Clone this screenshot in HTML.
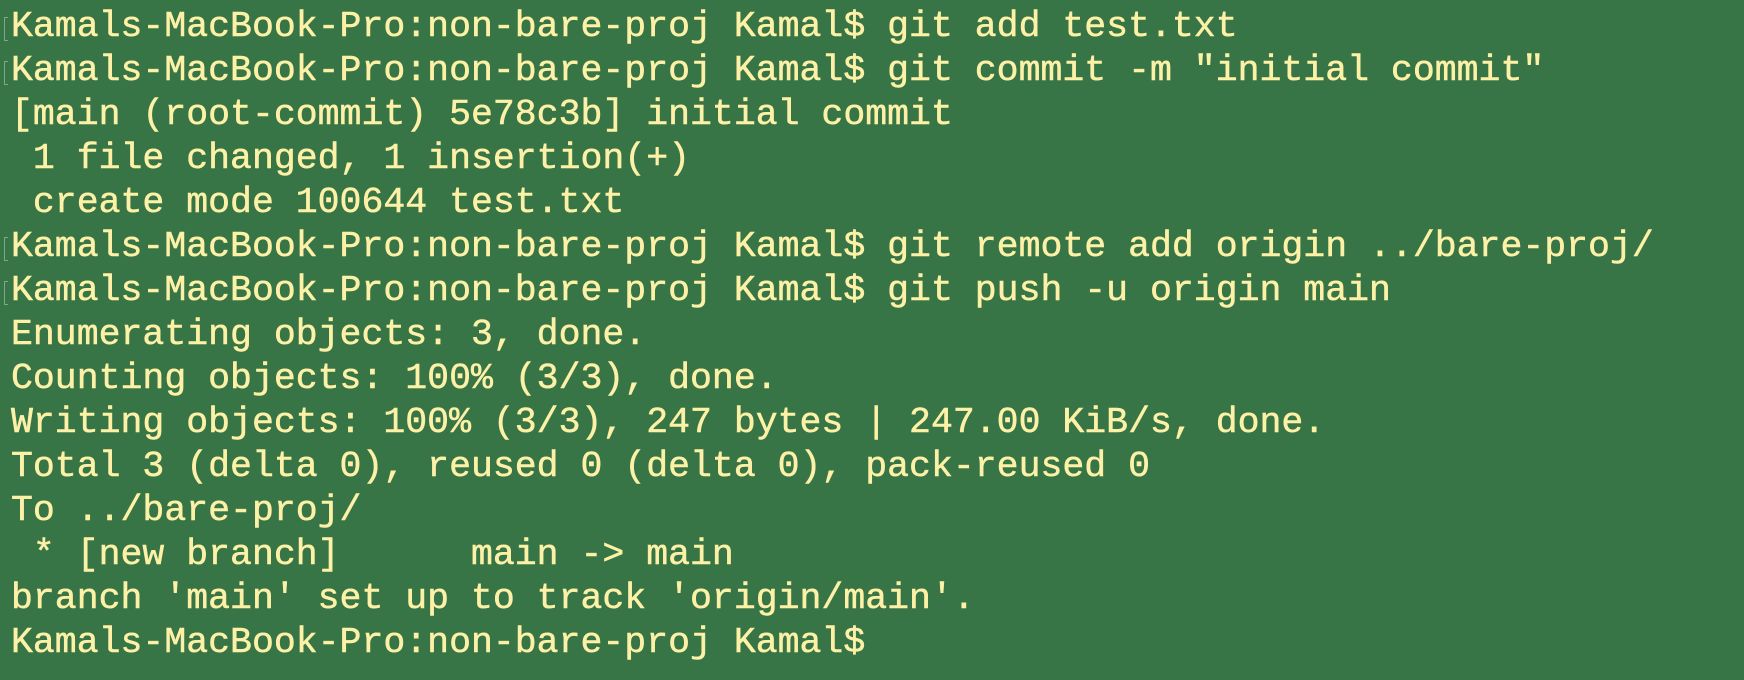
<!DOCTYPE html>
<html><head><meta charset="utf-8"><style>
html,body{margin:0;padding:0;width:1744px;height:680px;overflow:hidden;background:#387546;}
pre{margin:0;position:absolute;left:11px;top:5px;font-family:"Liberation Mono",monospace;font-size:36.5px;line-height:44px;color:#fdf1a7;white-space:pre;-webkit-text-stroke:0.5px #fdf1a7;}
.b{position:absolute;left:4px;width:3px;height:22px;border:1px solid #7ea887;border-right:none;}
</style></head><body>
<div class="b" style="top:17px"></div>
<div class="b" style="top:61px"></div>
<div class="b" style="top:237px"></div>
<div class="b" style="top:281px"></div>
<pre>Kamals-MacBook-Pro:non-bare-proj Kamal$ git add test.txt
Kamals-MacBook-Pro:non-bare-proj Kamal$ git commit -m "initial commit"
[main (root-commit) 5e78c3b] initial commit
 1 file changed, 1 insertion(+)
 create mode 100644 test.txt
Kamals-MacBook-Pro:non-bare-proj Kamal$ git remote add origin ../bare-proj/
Kamals-MacBook-Pro:non-bare-proj Kamal$ git push -u origin main
Enumerating objects: 3, done.
Counting objects: 100% (3/3), done.
Writing objects: 100% (3/3), 247 bytes | 247.00 KiB/s, done.
Total 3 (delta 0), reused 0 (delta 0), pack-reused 0
To ../bare-proj/
 * [new branch]      main -&gt; main
branch 'main' set up to track 'origin/main'.
Kamals-MacBook-Pro:non-bare-proj Kamal$</pre>
</body></html>
